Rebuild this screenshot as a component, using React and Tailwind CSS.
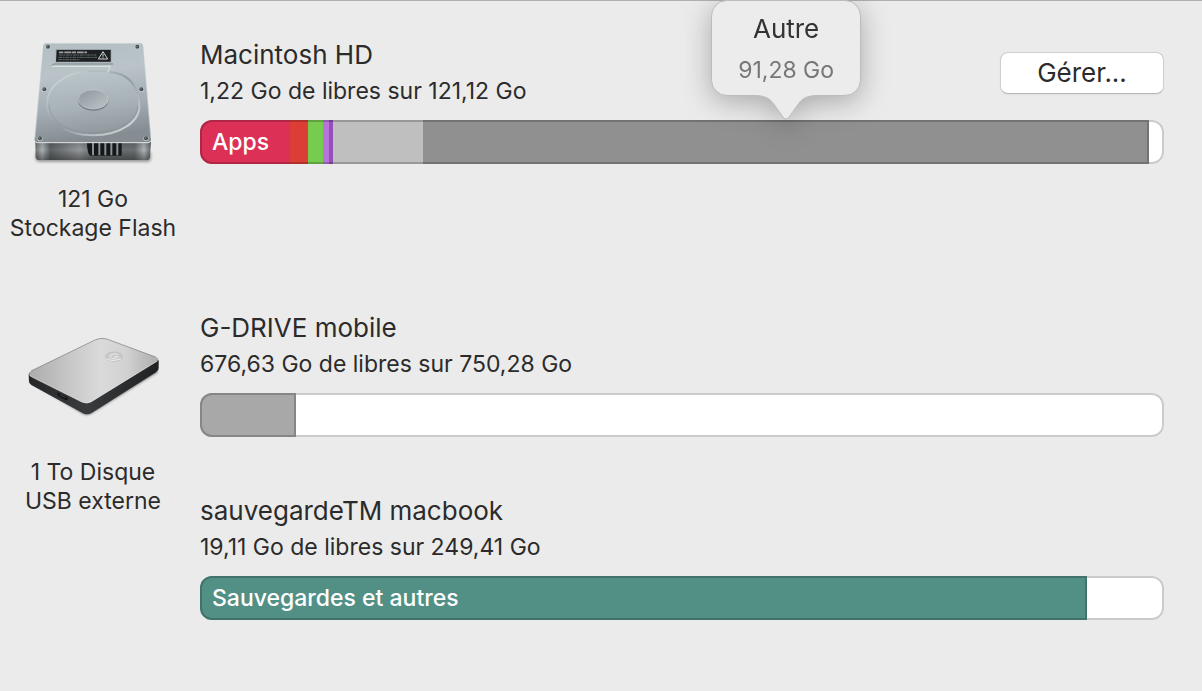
const drives = [
    {
        id: 'internal',
        icon: 'hd',
        caption: ['121 Go', 'Stockage Flash'],
        volumes: [
            {
                name: 'Macintosh HD',
                info: '1,22 Go de libres sur 121,12 Go',
                total: 121.12,
                manage: true,
                segments: [
                    { label: 'Apps', size: 11.31, color: 'bg-[#dc3056]' },
                    { size: 2.26, color: 'bg-[#dc3e35]' },
                    { size: 1.88, color: 'bg-[#77cc50]' },
                    { size: 0.75, color: 'bg-[#b873dc]' },
                    { size: 0.5, color: 'bg-[#9450b4]' },
                    { size: 11.31, color: 'bg-[#bfbfbf]' },
                    { size: 91.28, color: 'bg-[#909090]', tooltip: { title: 'Autre', value: '91,28 Go' } },
                ],
            },
        ],
    },
    {
        id: 'external',
        icon: 'usb',
        caption: ['1 To Disque', 'USB externe'],
        volumes: [
            {
                name: 'G-DRIVE mobile',
                info: '676,63 Go de libres sur 750,28 Go',
                total: 750.28,
                segments: [{ size: 74.6, color: 'bg-[#a8a8a8]' }],
            },
            {
                name: 'sauvegardeTM macbook',
                info: '19,11 Go de libres sur 249,41 Go',
                total: 249.41,
                segments: [{ label: 'Sauvegardes et autres', size: 229.6, color: 'bg-[#529086]' }],
            },
        ],
    },
];

const HardDiskIcon = () => (
    <svg width="150" height="145" viewBox="-5 0 450 435" aria-hidden="true">
        <defs>
            <linearGradient id="hdTop" x1="0" y1="0" x2="0.15" y2="1">
                <stop offset="0" stopColor="#b3bec3" />
                <stop offset="0.35" stopColor="#b9c3c8" />
                <stop offset="0.7" stopColor="#a3acb2" />
                <stop offset="1" stopColor="#858d93" />
            </linearGradient>
            <linearGradient id="hdFront" x1="0" y1="0" x2="1" y2="0">
                <stop offset="0" stopColor="#6c7174" />
                <stop offset="0.06" stopColor="#adb2b5" />
                <stop offset="0.13" stopColor="#5c6063" />
                <stop offset="0.38" stopColor="#94989a" />
                <stop offset="0.5" stopColor="#6a6e70" />
                <stop offset="0.86" stopColor="#6a6e70" />
                <stop offset="0.94" stopColor="#b0b5b7" />
                <stop offset="1" stopColor="#606467" />
            </linearGradient>
            <linearGradient id="hdShade" x1="0" y1="0" x2="0" y2="1">
                <stop offset="0" stopColor="#222" stopOpacity="0.25" />
                <stop offset="0.45" stopColor="#222" stopOpacity="0" />
                <stop offset="1" stopColor="#222" stopOpacity="0.5" />
            </linearGradient>
            <linearGradient id="hdRidge" x1="0" y1="0" x2="1" y2="1">
                <stop offset="0" stopColor="#dce3e6" />
                <stop offset="0.5" stopColor="#909a9f" />
                <stop offset="1" stopColor="#e0e5e8" />
            </linearGradient>
            <linearGradient id="hdHub" x1="0" y1="0" x2="1" y2="1">
                <stop offset="0" stopColor="#8d969b" />
                <stop offset="1" stopColor="#bdc5c9" />
            </linearGradient>
            <filter id="hdBlur" x="-10%" y="-50%" width="120%" height="200%">
                <feGaussianBlur stdDeviation="4" />
            </filter>
        </defs>
        <rect x="48" y="365" width="346" height="30" rx="10" fill="#555" opacity="0.6" filter="url(#hdBlur)" />
        <path d="M47 335H394L391 380Q390 390 380 390H59Q49 390 48 380Z" fill="url(#hdFront)" />
        <path d="M47 335H394L391 380Q390 390 380 390H59Q49 390 48 380Z" fill="url(#hdShade)" />
        <path d="M202 338H306V377H212Q203 373 202 338Z" fill="#14181a" />
        <path d="M220 338V376M239 338V376M257 338V376M275 338V376M293 338V376" stroke="#8c9193" strokeWidth="6" />
        <path d="M82 39H359Q370 39 371 51L394 325Q395 338 385 338H54Q43 338 45 325L70 51Q71 39 82 39Z" fill="url(#hdTop)" />
        <path d="M46 334Q48 338 54 338H385Q392 338 394 333" fill="none" stroke="#e1e5e6" strokeWidth="3" />
        <path d="M70 52L46 324M371 52L393 324" stroke="#d6dcdf" strokeWidth="2" opacity="0.7" />
        <path d="M82 40H359" stroke="#dbe1e4" strokeWidth="2" />
        <path d="M96 109L102 101H280L270 128C325 134 354 170 359 219C365 276 300 314 220 314C135 314 82 273 82 222C82 166 138 129 205 124H265" fill="#c2cbd0" fillOpacity="0.14" />
        <path d="M205 124C138 129 82 166 82 222C82 273 135 316 220 316C300 316 365 276 359 219C353 164 325 130 270 126" fill="none" stroke="url(#hdRidge)" strokeWidth="6" />
        <path d="M88 224C90 274 142 309 220 309C290 309 352 275 354 228" fill="none" stroke="#7f898f" strokeWidth="2" opacity="0.7" />
        <path d="M205 124H262L270 110" fill="none" stroke="#a4afb4" strokeWidth="3" opacity="0.5" />
        <path d="M96 108L102 102H280" fill="none" stroke="#7b868c" strokeWidth="3" />
        <path d="M96 109H271L264 126" fill="none" stroke="#dfe6e8" strokeWidth="3" />
        <ellipse cx="221" cy="211" rx="46" ry="31" fill="#737d83" />
        <ellipse cx="221" cy="208" rx="45" ry="29" fill="url(#hdHub)" stroke="#c9d0d3" strokeWidth="2" />
        <rect x="108" y="57" width="167" height="40" fill="#98a1a5" />
        <path d="M111 60H273V95H109Z" fill="#1e2123" />
        <path d="M118 67H202" stroke="#a0a0a0" strokeWidth="5" strokeDasharray="13 3 20 2" />
        <path d="M118 75H230M116 82H232M116 89H180" stroke="#858989" strokeWidth="2" strokeDasharray="11 2 6 2" />
        <path d="M250 65L236 87H264Z" fill="none" stroke="#d0d2d2" strokeWidth="3" strokeLinejoin="round" />
        <path d="M250 71V80M250 82V85" stroke="#d0d2d2" strokeWidth="3" />
        {[[85, 50], [353, 50], [74, 178], [365, 178], [61, 325], [379, 325]].map(([x, y]) => (
            <g key={`${x}-${y}`}>
                <ellipse cx={x} cy={y + 1} rx="8" ry="7" fill="#d2d9dc" opacity="0.7" />
                <circle cx={x} cy={y} r="6" fill="#454c50" />
                <circle cx={x - 1} cy={y - 1} r="2" fill="#8b9397" />
            </g>
        ))}
    </svg>
);

const UsbDriveIcon = () => (
    <svg width="150" height="145" viewBox="9 -66 450 435" aria-hidden="true">
        <defs>
            <linearGradient id="usbTop" x1="0" y1="0.5" x2="1" y2="0.5">
                <stop offset="0" stopColor="#acacac" />
                <stop offset="0.3" stopColor="#c6c6c6" />
                <stop offset="0.55" stopColor="#dadada" />
                <stop offset="0.75" stopColor="#d2d2d2" />
                <stop offset="1" stopColor="#acacac" />
            </linearGradient>
            <linearGradient id="usbSide" x1="0" y1="0" x2="1" y2="0">
                <stop offset="0" stopColor="#252628" />
                <stop offset="0.44" stopColor="#3a3b3d" />
                <stop offset="1" stopColor="#202123" />
            </linearGradient>
            <filter id="usbBlur" x="-10%" y="-10%" width="120%" height="120%">
                <feGaussianBlur stdDeviation="3" />
            </filter>
        </defs>
        <path d="M44 172L205 268Q215 273 228 267L429 142L425 132L216 255L46 160Z" fill="#444" opacity="0.6" filter="url(#usbBlur)" />
        <path d="M41 148Q41 142 50 140L430 104Q432 109 431 117V130Q431 137 423 142L231 263Q216 272 201 263L49 180Q42 176 42 168Z" fill="url(#usbSide)" />
        <path d="M48 138L242 44Q258 37 275 42L422 96Q434 101 427 108L229 230Q216 238 201 231L47 154Q38 147 48 138Z" fill="url(#usbTop)" />
        <path d="M42 148Q44 152 51 156L201 231Q216 238 229 230L427 108" fill="none" stroke="#f2f2f2" strokeWidth="2" />
        <path d="M48 138L242 44Q258 37 275 42L422 96" fill="none" stroke="#777" strokeWidth="2" />
        <path d="M127 202L158 217Q159 226 153 226L131 214Q126 211 127 202Z" fill="#101112" />
        <path d="M134 209L152 218" stroke="#68696b" strokeWidth="2" />
        <ellipse cx="297" cy="95" rx="25" ry="14" fill="#c9c9c9" stroke="#bababa" strokeWidth="2" />
        <path d="M275 101Q292 112 318 101" fill="none" stroke="#eee" strokeWidth="3" />
        <path d="M310 88Q291 84 285 94Q286 103 302 100L307 95H296" fill="none" stroke="#e0e0e0" strokeWidth="4" />
    </svg>
);

const Tooltip = ({ title, value }) => (
    <div className="absolute bottom-full left-1/2 z-10 -translate-x-1/2 pb-6 drop-shadow-[0_6px_14px_rgba(0,0,0,0.28)]">
        <div className="w-[150px] rounded-2xl border border-[#bcbcbc] bg-[#ececec] pt-2 text-center">
            <p className="text-[26px] leading-10 text-[#333]">{title}</p>
            <p className="pb-1 text-[23px] leading-[42px] text-[#777]">{value}</p>
        </div>
        <svg className="absolute bottom-0 left-1/2 -translate-x-1/2" width="60" height="26" viewBox="0 0 60 26" aria-hidden="true">
            <path d="M0 1.5C9 2 13 4 17 9L27 23Q30 27 33 23L43 9C47 4 51 2 60 1.5V0H0Z" fill="#ececec" />
            <path d="M0 1.5C9 2 13 4 17 9L27 23Q30 27 33 23L43 9C47 4 51 2 60 1.5" fill="none" stroke="#bcbcbc" />
        </svg>
    </div>
);

const StorageBar = ({ segments, total }) => {
    const used = segments.reduce((sum, s) => sum + s.size, 0);

    return (
        <div className="mt-[11px] h-11 rounded-xl bg-white inset-ring-2 inset-ring-[#cbcbcb]">
            {/* Used part, with one darker outline over all its segments */}
            <div
                className="relative flex h-full after:absolute after:inset-0 after:rounded-l-xl after:border-2 after:border-black/20"
                style={{ width: `${(used / total) * 100}%` }}
            >
                {segments.map((segment, index) => (
                    <div
                        key={index}
                        className={`relative flex items-center first:rounded-l-xl ${segment.color}`}
                        style={{ width: `${(segment.size / used) * 100}%` }}
                    >
                        {segment.label && (
                            <span className="pl-3 text-[23px] leading-10 font-medium whitespace-nowrap text-white">{segment.label}</span>
                        )}
                        {segment.tooltip && <Tooltip {...segment.tooltip} />}
                    </div>
                ))}
            </div>
        </div>
    );
};

const Volume = ({ volume }) => (
    <section>
        <div className="flex items-center justify-between">
            <div>
                <h2 className="text-[26px] leading-9">{volume.name}</h2>
                <p className="text-[23px] leading-9">{volume.info}</p>
            </div>
            {volume.manage && (
                <button
                    type="button"
                    className="h-[42px] w-[164px] rounded-lg border border-[#cfcfcf] border-b-[#b8b8b8] bg-white text-[26px] leading-9 shadow-xs"
                >
                    Gérer...
                </button>
            )}
        </div>
        <StorageBar segments={volume.segments} total={volume.total} />
    </section>
);

const App = () => {
    return (
        <main className="flex min-h-screen flex-col gap-[60px] border-t border-[#b0b0b0] bg-[#ebebeb] pt-[29px] font-[Inter,sans-serif] text-[#2b2b2b]">
            {drives.map((drive) => (
                <div key={drive.id} className="flex items-start gap-3.5 pr-[38px]">
                    <div className="flex w-[186px] shrink-0 flex-col items-center">
                        {drive.icon === 'hd' ? <HardDiskIcon /> : <UsbDriveIcon />}
                        <p className="mt-2.5 text-center text-[23px] leading-[29px] whitespace-nowrap">
                            {drive.caption[0]}
                            <br />
                            {drive.caption[1]}
                        </p>
                    </div>
                    <div className="flex min-w-0 grow flex-col gap-14 pt-[7px]">
                        {drive.volumes.map((volume) => (
                            <Volume key={volume.name} volume={volume} />
                        ))}
                    </div>
                </div>
            ))}
        </main>
    );
};

export default App;
